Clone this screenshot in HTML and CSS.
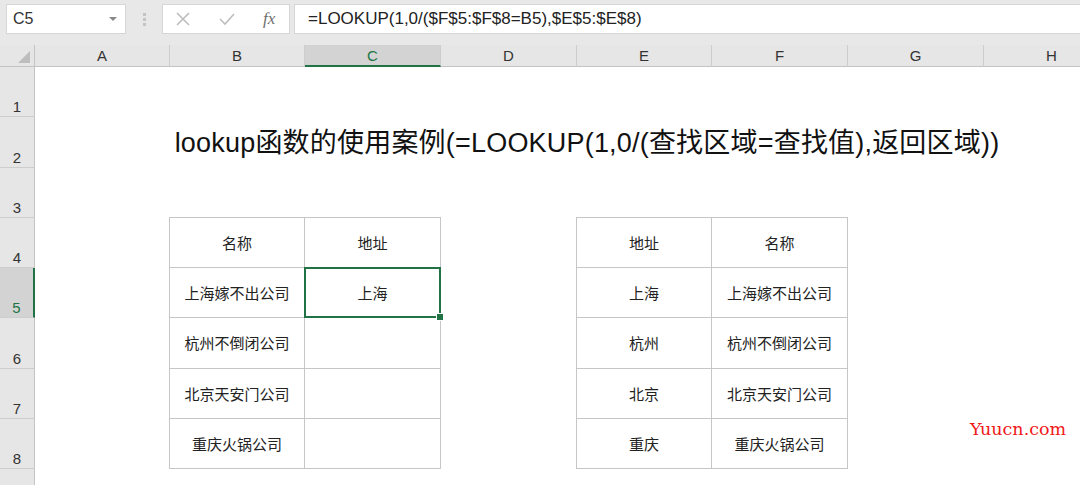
FILE: index.html
```html
<!DOCTYPE html>
<html lang="zh-CN">
<head>
    <meta charset="UTF-8">
    <meta name="viewport" content="width=device-width, initial-scale=1.0">
    <title>lookup函数的使用案例</title>
    <link rel="stylesheet" href="styles.css">
</head>
<body>

<div class="toolbar">
    <div class="namebox">
        <span>C5</span>
        <span class="caret"></span>
    </div>
    <div class="grip"><i></i><i></i><i></i></div>
    <div class="fxbox">
        <svg width="16" height="16" viewBox="0 0 16 16"><path d="M2 2L14 14M14 2L2 14" stroke="#bdbdbd" stroke-width="1.6" fill="none"/></svg>
        <svg width="18" height="16" viewBox="0 0 18 16"><path d="M2 8L7 13L16 3" stroke="#bdbdbd" stroke-width="1.6" fill="none"/></svg>
        <span class="fx">fx</span>
    </div>
    <div class="formula">=LOOKUP(1,0/($F$5:$F$8=B5),$E$5:$E$8)</div>
</div>

<div class="sheet">
    <div class="corner"><span></span></div>
    <div class="colhead">A</div>
    <div class="colhead">B</div>
    <div class="colhead active">C</div>
    <div class="colhead">D</div>
    <div class="colhead">E</div>
    <div class="colhead">F</div>
    <div class="colhead">G</div>
    <div class="colhead">H</div>

    <div class="rowhead r1">1</div>
    <div class="rowhead r2">2</div>
    <div class="rowhead r3">3</div>
    <div class="rowhead r4">4</div>
    <div class="rowhead r5 active">5</div>
    <div class="rowhead r6">6</div>
    <div class="rowhead r7">7</div>
    <div class="rowhead r8">8</div>
    <div class="rowhead r9"></div>

    <div class="title">lookup函数的使用案例(=LOOKUP(1,0/(查找区域=查找值),返回区域))</div>

    <div class="datatable left">
        <div class="cell">名称</div>
        <div class="cell">地址</div>
        <div class="cell">上海嫁不出公司</div>
        <div class="cell selected">上海</div>
        <div class="cell">杭州不倒闭公司</div>
        <div class="cell"></div>
        <div class="cell">北京天安门公司</div>
        <div class="cell"></div>
        <div class="cell">重庆火锅公司</div>
        <div class="cell"></div>
    </div>

    <div class="datatable right">
        <div class="cell">地址</div>
        <div class="cell">名称</div>
        <div class="cell">上海</div>
        <div class="cell">上海嫁不出公司</div>
        <div class="cell">杭州</div>
        <div class="cell">杭州不倒闭公司</div>
        <div class="cell">北京</div>
        <div class="cell">北京天安门公司</div>
        <div class="cell">重庆</div>
        <div class="cell">重庆火锅公司</div>
    </div>

    <div class="watermark">Yuucn.com</div>
</div>

</body>
</html>
```

FILE: styles.css
```css
body {
    margin: 0;
    width: 1080px;
    height: 485px;
    overflow: hidden;
    font-family: "Liberation Sans", "Noto Sans CJK SC", sans-serif;
    background: #ffffff;
    color: #222222;
}

/* formula bar */
.toolbar {
    height: 45px;
    background: #e8e8e8;
    display: flex;
    align-items: flex-start;
    padding-top: 4px;
    box-sizing: border-box;
}
.namebox {
    margin-left: 6px;
    width: 120px;
    height: 30px;
    box-sizing: border-box;
    background: #fff;
    border: 1px solid #d6d6d6;
    display: flex;
    align-items: center;
    justify-content: space-between;
    padding: 0 8px 0 6px;
    font-size: 16px;
    color: #333;
}
.caret {
    width: 0;
    height: 0;
    border-left: 4px solid transparent;
    border-right: 4px solid transparent;
    border-top: 4px solid #8a8a8a;
}
.grip {
    width: 36px;
    height: 30px;
    display: flex;
    flex-direction: column;
    align-items: center;
    justify-content: center;
    gap: 2px;
}
.grip i {
    width: 3px;
    height: 3px;
    background: #c4c4c4;
}
.fxbox {
    width: 128px;
    height: 30px;
    box-sizing: border-box;
    background: #fff;
    border: 1px solid #d6d6d6;
    display: flex;
    align-items: center;
    gap: 27px;
    padding-left: 12px;
}
.fx {
    font-family: "Liberation Serif", serif;
    font-style: italic;
    font-size: 17px;
    color: #6f6f6f;
}
.formula {
    margin-left: 4px;
    flex: 1;
    height: 30px;
    box-sizing: border-box;
    background: #fff;
    border: 1px solid #d6d6d6;
    border-right: none;
    padding-left: 13px;
    font-size: 17px;
    line-height: 28px;
    color: #222;
}

/* sheet grid */
.sheet {
    position: relative;
    display: grid;
    grid-template-columns: 35px 135px 135px 136px 136px 135px 136px 136px 136px;
    grid-template-rows: 22px repeat(9, 50.25px);
    height: 440px;
    overflow: hidden;
}
.corner {
    background: #e6e6e6;
    border-right: 1px solid #c4c4c4;
    border-bottom: 1px solid #c4c4c4;
    box-sizing: border-box;
    position: relative;
}
.corner span {
    position: absolute;
    right: 4px;
    bottom: 3px;
    width: 0;
    height: 0;
    border-left: 12px solid transparent;
    border-bottom: 12px solid #bdbdbd;
}
.colhead {
    background: #e6e6e6;
    border-right: 1px solid #cdcdcd;
    border-bottom: 1px solid #c4c4c4;
    box-sizing: border-box;
    text-align: center;
    font-size: 15px;
    line-height: 22px;
    color: #333;
}
.colhead.active {
    background: #d3d3d3;
    border-bottom: 2px solid #217346;
    color: #217346;
}
.rowhead {
    grid-column: 1;
    background: #e6e6e6;
    border-right: 1px solid #c4c4c4;
    border-bottom: 1px solid #cdcdcd;
    box-sizing: border-box;
    display: flex;
    align-items: flex-end;
    justify-content: center;
    padding-bottom: 1px;
    font-size: 15px;
    color: #333;
}
.rowhead.active {
    background: #d3d3d3;
    border-right: 2px solid #217346;
    color: #217346;
}
.r1 { grid-row: 2; }
.r2 { grid-row: 3; }
.r3 { grid-row: 4; }
.r4 { grid-row: 5; }
.r5 { grid-row: 6; }
.r6 { grid-row: 7; }
.r7 { grid-row: 8; }
.r8 { grid-row: 9; }
.r9 { grid-row: 10; }

.title {
    grid-row: 3;
    grid-column: 3 / 9;
    align-self: end;
    justify-self: center;
    white-space: nowrap;
    font-size: 27px;
    letter-spacing: 0.2px;
    padding-bottom: 8px;
    margin-left: 20px;
    color: #111;
}

/* the two little tables */
.datatable {
    grid-row: 5 / 10;
    display: grid;
    grid-template-columns: 135px 1fr;
    grid-template-rows: repeat(5, 1fr);
    border-top: 1px solid #c6c6c6;
    border-left: 1px solid #c6c6c6;
    margin-top: -1px;
    margin-left: -1px;
}
.datatable.left { grid-column: 3 / 5; }
.datatable.right { grid-column: 6 / 8; }
.cell {
    border-right: 1px solid #c6c6c6;
    border-bottom: 1px solid #c6c6c6;
    display: flex;
    align-items: center;
    justify-content: center;
    font-size: 15px;
    color: #222;
    position: relative;
}
.cell.selected::after {
    content: "";
    position: absolute;
    left: -1px;
    top: -1px;
    right: -1px;
    bottom: -1px;
    border: 2px solid #217346;
}
.cell.selected::before {
    content: "";
    position: absolute;
    right: -4px;
    bottom: -4px;
    width: 6px;
    height: 6px;
    background: #217346;
    border: 1px solid #fff;
    z-index: 2;
}

.watermark {
    position: absolute;
    left: 970px;
    top: 374px;
    font-family: "DejaVu Serif", serif;
    font-size: 17.5px;
    color: #f01818;
}
```
